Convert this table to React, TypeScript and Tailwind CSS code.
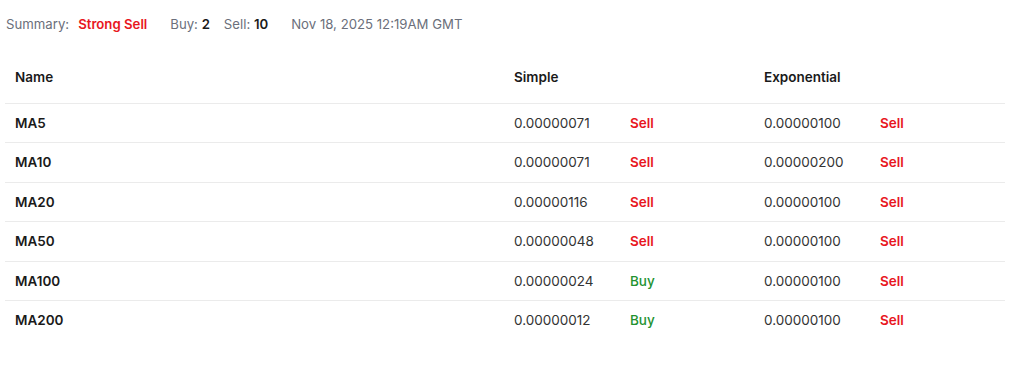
import React from 'react';

type Signal = 'Buy' | 'Sell';

type MaRow = {
    name: string;
    simple: string;
    simpleAction: Signal;
    exp: string;
    expAction: Signal;
};

const rows: MaRow[] = [
    { name: 'MA5', simple: '0.00000071', simpleAction: 'Sell', exp: '0.00000100', expAction: 'Sell' },
    { name: 'MA10', simple: '0.00000071', simpleAction: 'Sell', exp: '0.00000200', expAction: 'Sell' },
    { name: 'MA20', simple: '0.00000116', simpleAction: 'Sell', exp: '0.00000100', expAction: 'Sell' },
    { name: 'MA50', simple: '0.00000048', simpleAction: 'Sell', exp: '0.00000100', expAction: 'Sell' },
    { name: 'MA100', simple: '0.00000024', simpleAction: 'Buy', exp: '0.00000100', expAction: 'Sell' },
    { name: 'MA200', simple: '0.00000012', simpleAction: 'Buy', exp: '0.00000100', expAction: 'Sell' },
];

const SignalText: React.FC<{ value: Signal }> = ({ value }) => (
    <span className={value === 'Buy' ? 'text-[#22922f] font-medium' : 'text-[#e8161e] font-semibold'}>
        {value}
    </span>
);

export default function App() {
    return (
        <div
            className="w-[1024px] h-[367px] bg-white px-[5px] pt-[14px] text-[13.5px] text-[#1a1a1a]"
            style={{ fontFamily: 'Inter, "Noto Sans", sans-serif' }}
        >
            {/* summary line */}
            <div className="flex items-center h-5 pl-px leading-5 text-[13.2px]">
                <span className="text-[#6b6f7b]">Summary:</span>
                <span className="ml-[9px] font-semibold text-[#e8161e]">Strong Sell</span>
                <span className="ml-[23px] text-[#6b6f7b]">
                    Buy: <span className="font-semibold text-[#1a1a1a]">2</span>
                </span>
                <span className="ml-[14px] text-[#6b6f7b]">
                    Sell: <span className="font-semibold text-[#1a1a1a]">10</span>
                </span>
                <span className="ml-[23px] text-[#6b6f7b]">Nov 18, 2025 12:19AM GMT</span>
            </div>

            <table className="mt-[17px] w-[1000px] table-fixed border-collapse">
                <colgroup>
                    <col className="w-[499px]" />
                    <col className="w-[116px]" />
                    <col className="w-[134px]" />
                    <col className="w-[116px]" />
                    <col className="w-[135px]" />
                </colgroup>
                <thead>
                    <tr className="h-[52px]">
                        <th className="px-[10px] text-left font-semibold">Name</th>
                        <th colSpan={2} className="px-[10px] text-left font-semibold">Simple</th>
                        <th colSpan={2} className="px-[10px] text-left font-semibold">Exponential</th>
                    </tr>
                </thead>
                <tbody>
                    {rows.map((row) => (
                        <tr key={row.name} className="h-[39.5px] border-t border-[#ebebeb]">
                            <td className="px-[10px] font-semibold">{row.name}</td>
                            <td className="px-[10px] text-[#333]">{row.simple}</td>
                            <td className="px-[10px]">
                                <SignalText value={row.simpleAction} />
                            </td>
                            <td className="px-[10px] text-[#333]">{row.exp}</td>
                            <td className="px-[10px]">
                                <SignalText value={row.expAction} />
                            </td>
                        </tr>
                    ))}
                </tbody>
            </table>
        </div>
    );
}
